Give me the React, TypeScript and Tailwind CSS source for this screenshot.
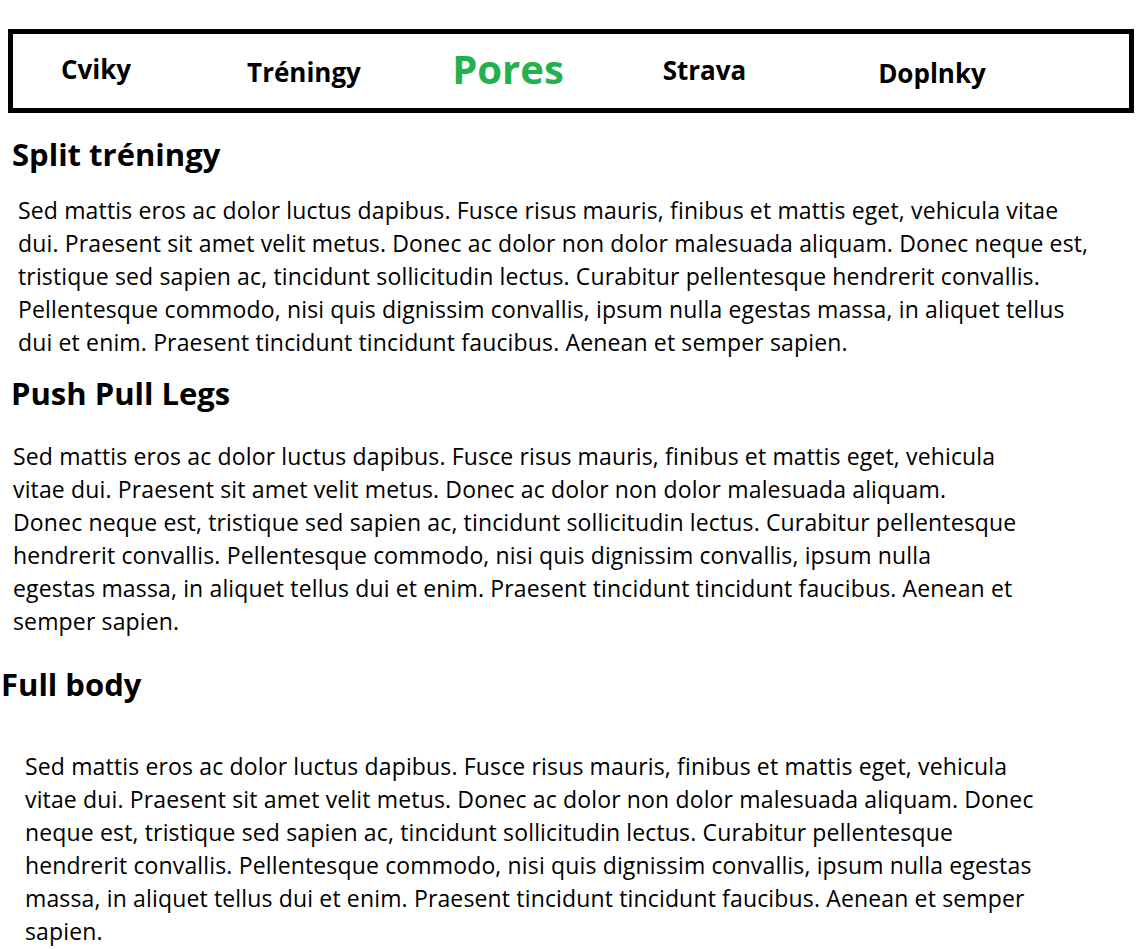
const LOREM_1 = [
  "Sed mattis eros ac dolor luctus dapibus. Fusce risus mauris, finibus et mattis eget, vehicula vitae",
  "dui. Praesent sit amet velit metus. Donec ac dolor non dolor malesuada aliquam. Donec neque est,",
  "tristique sed sapien ac, tincidunt sollicitudin lectus. Curabitur pellentesque hendrerit convallis.",
  "Pellentesque commodo, nisi quis dignissim convallis, ipsum nulla egestas massa, in aliquet tellus",
  "dui et enim. Praesent tincidunt tincidunt faucibus. Aenean et semper sapien.",
];

const LOREM_2 = [
  "Sed mattis eros ac dolor luctus dapibus. Fusce risus mauris, finibus et mattis eget, vehicula",
  "vitae dui. Praesent sit amet velit metus. Donec ac dolor non dolor malesuada aliquam.",
  "Donec neque est, tristique sed sapien ac, tincidunt sollicitudin lectus. Curabitur pellentesque",
  "hendrerit convallis. Pellentesque commodo, nisi quis dignissim convallis, ipsum nulla",
  "egestas massa, in aliquet tellus dui et enim. Praesent tincidunt tincidunt faucibus. Aenean et",
  "semper sapien.",
];

const LOREM_3 = [
  "Sed mattis eros ac dolor luctus dapibus. Fusce risus mauris, finibus et mattis eget, vehicula",
  "vitae dui. Praesent sit amet velit metus. Donec ac dolor non dolor malesuada aliquam. Donec",
  "neque est, tristique sed sapien ac, tincidunt sollicitudin lectus. Curabitur pellentesque",
  "hendrerit convallis. Pellentesque commodo, nisi quis dignissim convallis, ipsum nulla egestas",
  "massa, in aliquet tellus dui et enim. Praesent tincidunt tincidunt faucibus. Aenean et semper",
  "sapien.",
];

function Para({ lines, className }: { lines: string[]; className: string }) {
  return (
    <p className={"text-[23px] leading-[33px] tracking-[0.15px] text-black " + className}>
      {lines.map((l, i) => (
        <span key={i} className="block whitespace-nowrap">{l}</span>
      ))}
    </p>
  );
}

export default function App() {
  return (
    <div className="min-h-[949px] bg-white text-black font-['Open_Sans',sans-serif]">
      {/* Navigace */}
      <nav className="ml-[8px] mt-[29px] w-[1126px] h-[84px] border-[5px] border-black flex">
        <div className="w-[166px] flex justify-center pt-[16px]">
          <span className="text-[26px] font-bold">Cviky</span>
        </div>
        <div className="w-[250px] flex justify-center pt-[19px]">
          <span className="text-[26px] font-bold">Tréningy</span>
        </div>
        <div className="w-[158px] flex justify-center pt-[5px]">
          <span className="text-[40px] font-bold text-[#22b14c]">Pores</span>
        </div>
        <div className="w-[235px] flex justify-center pt-[17px]">
          <span className="text-[26px] font-bold">Strava</span>
        </div>
        <div className="w-[220px] flex justify-center pt-[20px]">
          <span className="text-[26px] font-bold">Doplnky</span>
        </div>
      </nav>

      <h2 className="ml-[12px] mt-[21px] text-[31px] font-bold leading-[40px]">Split tréningy</h2>
      <Para lines={LOREM_1} className="ml-[18px] mt-[20px]" />

      <h2 className="ml-[11px] mt-[14px] text-[31px] font-bold leading-[40px]">Push Pull Legs</h2>
      <Para lines={LOREM_2} className="ml-[13px] mt-[27px]" />

      <h2 className="ml-[1px] mt-[26px] text-[31px] font-bold leading-[40px]">Full body</h2>
      <Para lines={LOREM_3} className="ml-[25px] mt-[46px]" />
    </div>
  );
}
